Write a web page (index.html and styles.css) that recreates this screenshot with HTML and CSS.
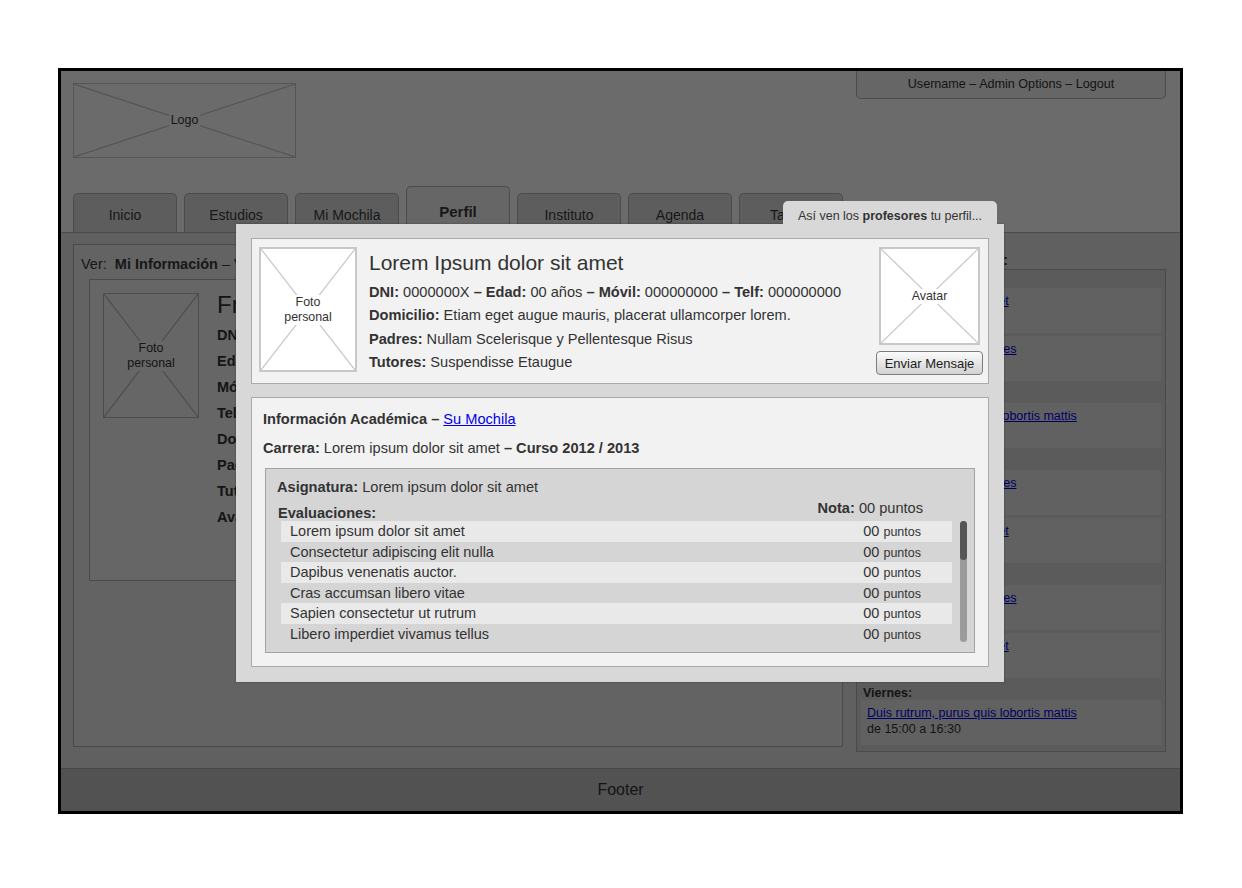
FILE: index.html
```html
<!DOCTYPE html>
<html lang="es">
<head>
<meta charset="utf-8">
<title>Perfil</title>
<link rel="stylesheet" href="styles.css">
</head>
<body>
<div class="frame">
  <header class="top">
    <div class="top-row">
      <div class="ph logo">
        <svg class="cross" viewBox="0 0 100 100" preserveAspectRatio="none"><path d="M0 0L100 100M100 0L0 100"/></svg>
        <span class="ph-label">Logo</span>
      </div>
      <div class="userbar">Username – Admin Options – Logout</div>
    </div>
    <nav class="tabs">
      <div class="tab">Inicio</div>
      <div class="tab">Estudios</div>
      <div class="tab">Mi Mochila</div>
      <div class="tab active">Perfil</div>
      <div class="tab">Instituto</div>
      <div class="tab">Agenda</div>
      <div class="tab">Tareas</div>
    </nav>
  </header>

  <main class="main">
    <section class="left">
      <div class="ver">Ver: &nbsp;<b>Mi Información</b> – Vista de profesores – Vista pública</div>
      <div class="inner">
        <div class="ph photo-sm">
          <svg class="cross" viewBox="0 0 100 100" preserveAspectRatio="none"><path d="M0 0L100 100M100 0L0 100"/></svg>
          <span class="ph-label">Foto<br>personal</span>
        </div>
        <div class="info">
          <div class="info-name">Francisco Javier Pérez Gómez</div>
          <div class="info-line"><b>DNI:</b> 0000000X</div>
          <div class="info-line"><b>Edad:</b> 00 años</div>
          <div class="info-line"><b>Móvil:</b> 000000000</div>
          <div class="info-line"><b>Telf:</b> 000000000</div>
          <div class="info-line"><b>Domicilio:</b> Etiam eget augue mauris</div>
          <div class="info-line"><b>Padres:</b> Nullam Scelerisque</div>
          <div class="info-line"><b>Tutores:</b> Suspendisse Etaugue</div>
          <div class="info-line"><b>Avatar:</b> Cambiar imagen</div>
        </div>
      </div>
    </section>

    <aside class="right">
      <div class="right-title">Próximas actividades:</div>
      <div class="agenda">
        <div class="day-group">
          <div class="day">Lunes:</div>
          <div class="ev"><a href="#">Nam ipsum dolor sit amet</a><br>de 15:00 a 16:30</div>
          <div class="ev"><a href="#">Natoque penatibus montes</a><br>de 17:00 a 18:00</div>
        </div>
        <div class="day-group">
          <div class="day">Martes:</div>
          <div class="ev"><a href="#">Duis rutrum, purus quis lobortis mattis</a><br>de 15:00 a 16:30</div>
        </div>
        <div class="day-group">
          <div class="day">Miércoles:</div>
          <div class="ev"><a href="#">Natoque penatibus montes</a><br>de 15:00 a 16:30</div>
          <div class="ev"><a href="#">Nam ipsum dolor sit amet</a><br>de 17:00 a 18:00</div>
        </div>
        <div class="day-group">
          <div class="day">Jueves:</div>
          <div class="ev"><a href="#">Natoque penatibus montes</a><br>de 15:00 a 16:30</div>
          <div class="ev"><a href="#">Nam ipsum dolor sit amet</a><br>de 17:00 a 18:00</div>
        </div>
        <div class="day-group">
          <div class="day">Viernes:</div>
          <div class="ev"><a href="#">Duis rutrum, purus quis lobortis mattis</a><br>de 15:00 a 16:30</div>
        </div>
      </div>
    </aside>
  </main>

  <footer class="foot">Footer</footer>

  <div class="dim"></div>

  <div class="modal">
    <div class="modal-tab">Así ven los <b>profesores</b> tu perfil...</div>
    <div class="card profile">
      <div class="ph photo">
        <svg class="cross" viewBox="0 0 100 100" preserveAspectRatio="none"><path d="M0 0L100 100M100 0L0 100"/></svg>
        <span class="ph-label">Foto<br>personal</span>
      </div>
      <div class="pinfo">
        <div class="pname">Lorem Ipsum dolor sit amet</div>
        <div class="pline first"><b>DNI:</b> 0000000X <b>–</b> <b>Edad:</b> 00 años <b>–</b> <b>Móvil:</b> 000000000 <b>–</b> <b>Telf:</b> 000000000</div>
        <div class="pline"><b>Domicilio:</b> Etiam eget augue mauris, placerat ullamcorper lorem.</div>
        <div class="pline"><b>Padres:</b> Nullam Scelerisque y Pellentesque Risus</div>
        <div class="pline"><b>Tutores:</b> Suspendisse Etaugue</div>
      </div>
      <div class="pside">
        <div class="ph avatar">
          <svg class="cross" viewBox="0 0 100 100" preserveAspectRatio="none"><path d="M0 0L100 100M100 0L0 100"/></svg>
          <span class="ph-label">Avatar</span>
        </div>
        <button class="btn">Enviar Mensaje</button>
      </div>
    </div>

    <div class="card acad">
      <div class="acad-title"><b>Información Académica –</b> <a href="#">Su Mochila</a></div>
      <div class="carrera"><b>Carrera:</b> Lorem ipsum dolor sit amet <b>– Curso 2012 / 2013</b></div>
      <div class="subbox">
        <div class="asig"><b>Asignatura:</b> Lorem ipsum dolor sit amet</div>
        <div class="eval-head">
          <b class="eval-title">Evaluaciones:</b>
          <span class="nota"><b>Nota:</b> 00 puntos</span>
        </div>
        <div class="evals">
          <div class="rows">
            <div class="row"><span>Lorem ipsum dolor sit amet</span><span class="pts">00 <small>puntos</small></span></div>
            <div class="row"><span>Consectetur adipiscing elit nulla</span><span class="pts">00 <small>puntos</small></span></div>
            <div class="row"><span>Dapibus venenatis auctor.</span><span class="pts">00 <small>puntos</small></span></div>
            <div class="row"><span>Cras accumsan libero vitae</span><span class="pts">00 <small>puntos</small></span></div>
            <div class="row"><span>Sapien consectetur ut rutrum</span><span class="pts">00 <small>puntos</small></span></div>
            <div class="row"><span>Libero imperdiet vivamus tellus</span><span class="pts">00 <small>puntos</small></span></div>
          </div>
          <div class="scroll"><div class="thumb"></div></div>
        </div>
      </div>
    </div>
  </div>
</div>
</body>
</html>
```

FILE: styles.css
```css
* { box-sizing: border-box; }

body {
  margin: 0;
  background: #ffffff;
  font-family: "Liberation Sans", Arial, Helvetica, sans-serif;
  color: #333333;
}

a { color: #0000ee; text-decoration: underline; }

/* ---------- frame ---------- */
.frame {
  position: relative;
  margin: 68px 0 0 58px;
  width: 1125px;
  height: 746px;
  border: 3px solid #000000;
  display: flex;
  flex-direction: column;
  overflow: hidden;
  background: #e4e4e4;
}

/* ---------- placeholders ---------- */
.ph {
  position: relative;
  display: flex;
  align-items: center;
  justify-content: center;
  text-align: center;
  font-size: 12.4px;
  line-height: 15px;
  color: #333333;
}
.ph .cross {
  position: absolute;
  left: 0; top: 0;
  width: 100%;
  height: 100%;
}
.ph .cross path {
  fill: none;
  stroke-width: 1.2;
  vector-effect: non-scaling-stroke;
}
.ph-label { position: relative; padding: 0 2px; }

/* ---------- header ---------- */
.top {
  flex: none;
  height: 162px;
  border-bottom: 1px solid #b4b4b4;
  background: #ffffff;
  display: flex;
  flex-direction: column;
}
.top-row {
  display: flex;
  justify-content: space-between;
  align-items: flex-start;
}
.logo {
  margin: 12px 0 0 12px;
  width: 223px;
  height: 75px;
  border: 1px solid #cacaca;
  background: #ffffff;
}
.logo .cross path { stroke: #cacaca; }
.logo .ph-label { background: #ffffff; }

.userbar {
  width: 310px;
  height: 28px;
  margin-right: 14px;
  border: 1px solid #b3b3b3;
  border-top: 0;
  border-radius: 0 0 5px 5px;
  background: #f4f4f4;
  font-size: 12.6px;
  line-height: 16px;
  padding-top: 5px;
  text-align: center;
  color: #333333;
}

.tabs {
  margin-top: auto;
  display: flex;
  align-items: flex-end;
  gap: 7px;
  padding-left: 12px;
}
.tab {
  width: 104px;
  height: 39px;
  border: 1px solid #b2b2b2;
  border-bottom: 0;
  border-radius: 5px 5px 0 0;
  background: #dedede;
  font-size: 14px;
  line-height: 18px;
  padding-top: 12px;
  text-align: center;
  color: #3a3a3a;
}
.tab.active {
  height: 46px;
  background: #f4f4f4;
  font-weight: bold;
  font-size: 15px;
  padding-top: 16px;
}

/* ---------- main ---------- */
.main {
  flex: 1;
  display: flex;
  gap: 13px;
  padding: 11px 14px 0 12px;
  background: #e4e4e4;
}

.left {
  width: 770px;
  height: 503px;
  border: 1px solid #b0b0b0;
  background: #ebebeb;
}
.ver {
  margin: 11px 0 0 7px;
  font-size: 14.5px;
  line-height: 16px;
  color: #3a3a3a;
  white-space: nowrap;
}
.inner {
  margin: 7px 0 0 15px;
  width: 738px;
  height: 302px;
  border: 1px solid #b0b0b0;
  background: #f4f4f4;
  padding: 13px;
  display: flex;
  align-items: flex-start;
}
.photo-sm {
  flex: none;
  width: 96px;
  height: 125px;
  border: 1px solid #b8b8b8;
  background: #f4f4f4;
}
.photo-sm .cross path { stroke: #b8b8b8; }
.photo-sm .ph-label { background: #f4f4f4; }
.info { margin-left: 18px; color: #333333; }
.info-name { font-size: 24px; line-height: 24px; }
.info-line { font-size: 14.5px; line-height: 26px; }
.info-name + .info-line { margin-top: 5px; }

.right {
  width: 310px;
  display: flex;
  flex-direction: column;
}
.right-title {
  height: 25px;
  padding: 8px 0 0 4px;
  font-size: 14px;
  line-height: 16px;
  font-weight: bold;
  color: #333333;
  white-space: nowrap;
}
.agenda {
  border: 1px solid #b0b0b0;
  background: #d9d9d9;
  padding: 0 4px 6px;
  font-size: 12.5px;
  color: #333333;
}
.day-group + .day-group { margin-top: 4px; }
.day {
  height: 18px;
  padding: 4px 2px 0;
  line-height: 14px;
  font-weight: bold;
}
.ev {
  height: 45px;
  background: #e8e8e8;
  padding: 5px 6px 0;
  line-height: 16px;
}
.ev + .ev { margin-top: 3px; }

/* ---------- footer ---------- */
.foot {
  flex: none;
  height: 43px;
  border-top: 1px solid #a9a9a9;
  background: #c4c4c4;
  text-align: center;
  font-size: 16px;
  line-height: 42px;
  color: #333333;
}

/* ---------- dim overlay ---------- */
.dim {
  position: absolute;
  left: 0; top: 0; right: 0; bottom: 0;
  background: rgba(0, 0, 0, 0.58);
  z-index: 1;
}

/* ---------- modal ---------- */
.modal {
  position: absolute;
  left: 175px;
  top: 153px;
  width: 768px;
  height: 458px;
  background: #d8d8d8;
  padding: 14px 15px 15px;
  z-index: 2;
  box-shadow: 0 0 2px rgba(0, 0, 0, 0.35);
  color: #333333;
}
.modal-tab {
  position: absolute;
  right: 7px;
  top: -23px;
  width: 214px;
  height: 23px;
  background: #d8d8d8;
  border-radius: 5px 5px 0 0;
  font-size: 12.5px;
  line-height: 14px;
  padding-top: 8px;
  text-align: center;
  color: #333333;
}

.card {
  background: #f2f2f2;
  border: 1px solid #a9a9a9;
}
.profile {
  display: flex;
  align-items: flex-start;
  height: 146px;
  padding: 8px 5px 0 7px;
}
.photo {
  flex: none;
  width: 98px;
  height: 125px;
  border: 2px solid #c8c8c8;
  background: #ffffff;
}
.photo .cross path, .avatar .cross path { stroke: #c6c6c6; }
.photo .ph-label, .avatar .ph-label { background: #ffffff; }
.pinfo { flex: 1; margin-left: 12px; }
.pname { font-size: 21px; line-height: 24px; margin-top: 4px; }
.pline { font-size: 14.6px; line-height: 23.4px; white-space: nowrap; }
.pline.first { margin-top: 6px; }
.pside {
  flex: none;
  width: 107px;
  display: flex;
  flex-direction: column;
  align-items: center;
  gap: 6px;
}
.avatar {
  width: 101px;
  height: 98px;
  border: 2px solid #c8c8c8;
  background: #ffffff;
}
.btn {
  width: 107px;
  height: 24px;
  border: 1px solid #7d7d7d;
  border-radius: 4px;
  background: linear-gradient(#fbfbfb, #d2d2d2);
  font-family: "Liberation Sans", Arial, sans-serif;
  font-size: 13px;
  color: #222222;
  padding: 0;
}

.acad {
  margin-top: 13px;
  height: 270px;
  padding: 13px 13px 0 11px;
  font-size: 14.6px;
}
.acad-title { line-height: 16px; }
.carrera { margin-top: 13px; line-height: 16px; }
.subbox {
  margin: 12px 0 0 2px;
  border: 1px solid #a3a3a3;
  background: #d5d5d5;
  padding: 9px 0 8px 11px;
}
.asig { line-height: 18px; }
.eval-head {
  display: flex;
  justify-content: space-between;
  height: 25px;
  padding-right: 51px;
}
.eval-title { margin-left: 1px; padding-top: 9px; line-height: 16px; }
.nota { padding-top: 4px; line-height: 16px; }
.evals {
  display: flex;
  gap: 8px;
  margin-left: 4px;
}
.rows { width: 671px; }
.row {
  display: flex;
  justify-content: space-between;
  height: 20.5px;
  line-height: 20.5px;
  padding: 0 31px 0 9px;
  font-size: 14.5px;
}
.row:nth-child(odd) { background: #e9e9e9; }
.pts small { font-size: 12.5px; }
.scroll {
  width: 7px;
  height: 121px;
  border-radius: 4px;
  background: #9b9b9b;
  display: flex;
  flex-direction: column;
}
.thumb {
  height: 39px;
  border-radius: 4px;
  background: #555555;
}
```
